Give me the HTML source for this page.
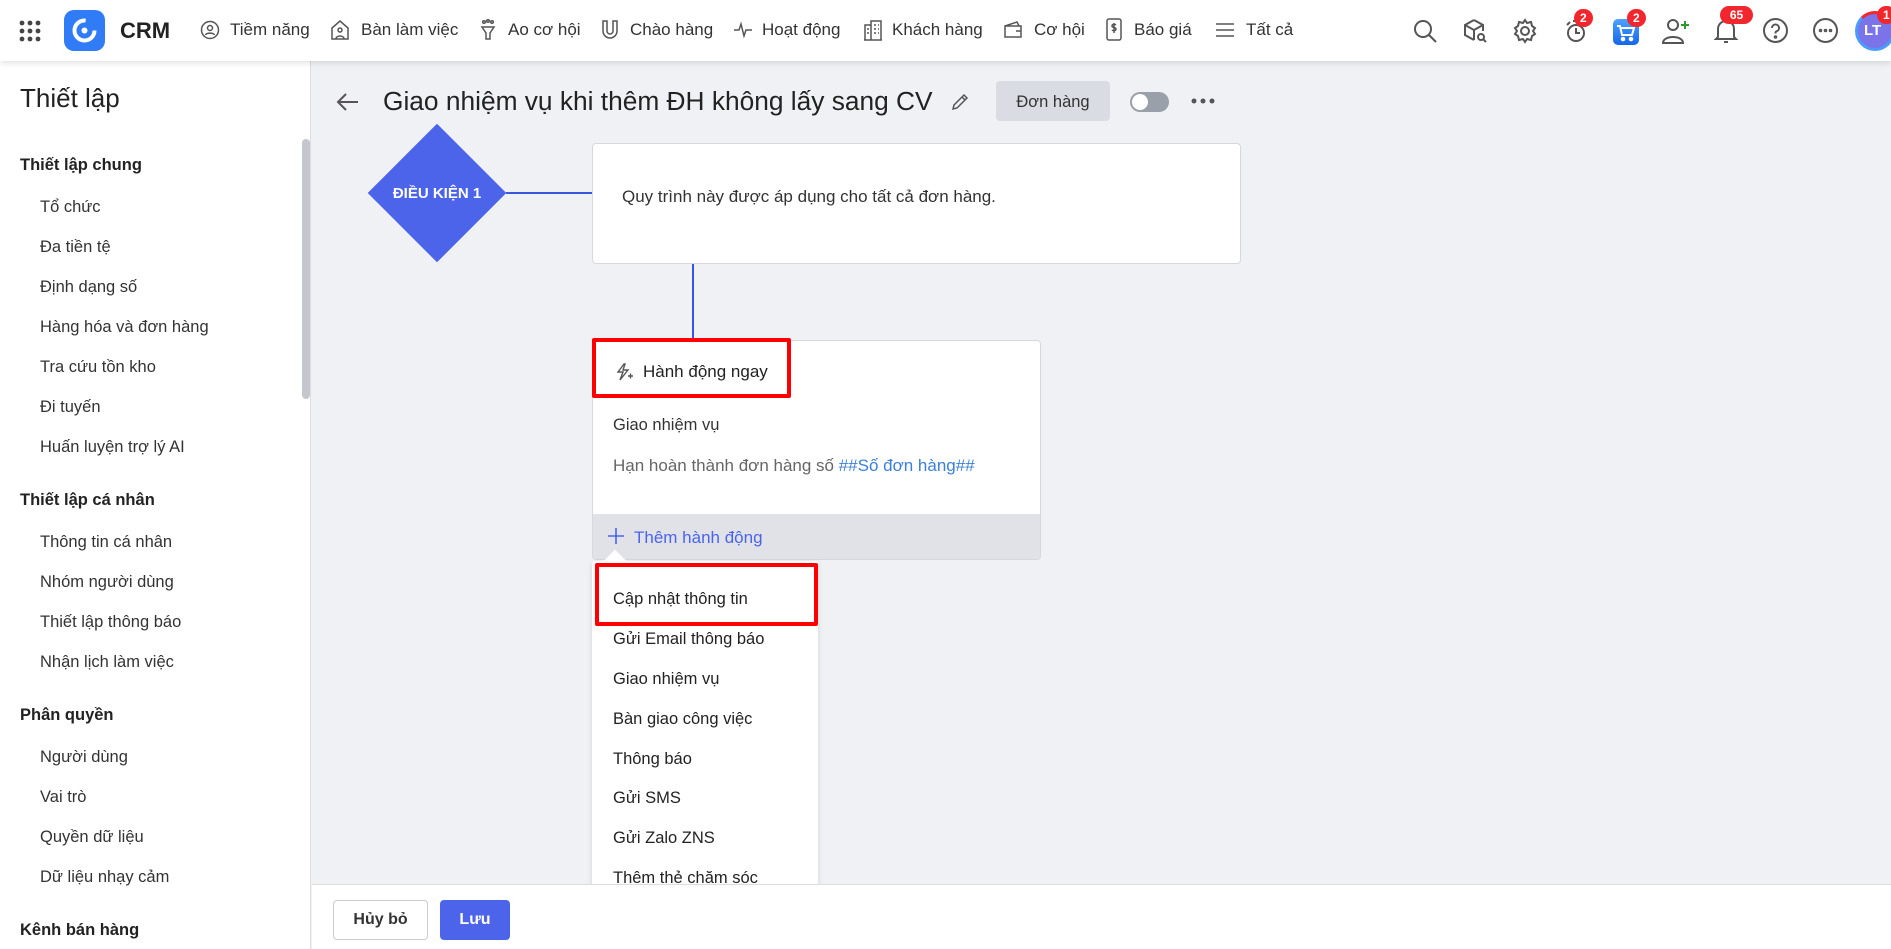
<!DOCTYPE html>
<html><head><meta charset="utf-8"><style>
*{box-sizing:border-box;margin:0;padding:0}
body{width:1891px;height:949px;overflow:hidden;background:#f0f1f4;font-family:"Liberation Sans","Noto Sans CJK SC",sans-serif;color:#222;position:relative}
.a{position:absolute;white-space:nowrap}
.hdr{position:absolute;left:0;top:0;width:1891px;height:61px;background:#fff;box-shadow:0 2px 6px rgba(0,0,0,.12);z-index:5}
.nav{font-size:17px;color:#333;top:20px}
.side{position:absolute;left:0;top:61px;width:311px;height:888px;background:#fff;border-right:1px solid #ddd}
.sh{font-size:16.5px;font-weight:bold;color:#222;left:20px}
.si{font-size:16.5px;color:#333;left:40px}
.badge{position:absolute;background:#f2262d;color:#fff;font-size:12px;font-weight:bold;border-radius:10px;height:18px;line-height:18px;padding:0 6px;text-align:center}
.dd{font-size:16.5px;color:#222;left:613px}
</style></head><body>
<div class="hdr">
<svg class="a" style="left:18px;top:19px" width="24" height="24"><g fill="#444"><circle cx="4" cy="4" r="2.4"/><circle cx="12" cy="4" r="2.4"/><circle cx="20" cy="4" r="2.4"/><circle cx="4" cy="12" r="2.4"/><circle cx="12" cy="12" r="2.4"/><circle cx="20" cy="12" r="2.4"/><circle cx="4" cy="20" r="2.4"/><circle cx="12" cy="20" r="2.4"/><circle cx="20" cy="20" r="2.4"/></g></svg>
<div class="a" style="left:64px;top:10px;width:41px;height:41px;border-radius:10px;background:#2f7cf6"><svg width="41" height="41"><circle cx="20.5" cy="20.5" r="10" fill="none" stroke="#fff" stroke-width="4" stroke-dasharray="48 15"/><circle cx="20.5" cy="20.5" r="3" fill="#fff"/></svg></div>
<div class="a" style="left:120px;top:18px;font-size:22px;font-weight:bold">CRM</div>
<svg class="a" style="left:200px;top:20px" width="20" height="20" fill="none" stroke="#555" stroke-width="1.5"><circle cx="10" cy="10" r="8.5"/><circle cx="10" cy="8" r="2.5"/><path d="M5.5 15c1-2.5 8-2.5 9 0"/></svg>
<div class="a nav" style="left:230px">Tiềm năng</div>
<svg class="a" style="left:330px;top:19px" width="20" height="22" fill="none" stroke="#555" stroke-width="1.5"><path d="M2 20V9l8-7 8 7v11z"/><circle cx="10" cy="11" r="2"/><path d="M6 20c0-4 8-4 8 0"/></svg>
<div class="a nav" style="left:361px">Bàn làm việc</div>
<svg class="a" style="left:479px;top:19px" width="18" height="22" fill="none" stroke="#555" stroke-width="1.5"><path d="M3 8h12l-4 6v6h-4v-6z"/><circle cx="5" cy="3" r="1.3"/><circle cx="9" cy="2" r="1.3"/><circle cx="13" cy="3" r="1.3"/></svg>
<div class="a nav" style="left:508px">Ao cơ hội</div>
<svg class="a" style="left:600px;top:19px" width="20" height="22" fill="none" stroke="#555" stroke-width="1.5"><path d="M3 2v10a7 7 0 0 0 14 0V2h-4v10a3 3 0 0 1-6 0V2z"/></svg>
<div class="a nav" style="left:630px">Chào hàng</div>
<svg class="a" style="left:733px;top:21px" width="20" height="18" fill="none" stroke="#555" stroke-width="1.5"><path d="M1 9h5l2-6 3 12 2-6h6"/></svg>
<div class="a nav" style="left:762px">Hoạt động</div>
<svg class="a" style="left:863px;top:19px" width="20" height="22" fill="none" stroke="#555" stroke-width="1.5"><path d="M2 21V6h6v15M8 21V2h10v19M1 21h18M11 6h2M15 6h1M11 10h2M15 10h1M11 14h2M15 14h1M4 10h2M4 14h2"/></svg>
<div class="a nav" style="left:892px">Khách hàng</div>
<svg class="a" style="left:1003px;top:21px" width="22" height="18" fill="none" stroke="#555" stroke-width="1.5"><path d="M2 5h16v11H2zM2 5l12-4 2 4M13 10h5"/></svg>
<div class="a nav" style="left:1034px">Cơ hội</div>
<svg class="a" style="left:1105px;top:18px" width="18" height="23" fill="none" stroke="#555" stroke-width="1.5"><rect x="2" y="1" width="14" height="21" rx="2"/><path d="M11 7c-1-1-4-1-4 1s4 1 4 3-3 2-4 1M9 5v10"/></svg>
<div class="a nav" style="left:1134px">Báo giá</div>
<svg class="a" style="left:1215px;top:22px" width="20" height="16" stroke="#555" stroke-width="1.5"><path d="M1 2h18M1 8h18M1 14h18"/></svg>
<div class="a nav" style="left:1246px">Tất cả</div>
<svg class="a" style="left:1412px;top:18px" width="26" height="26" fill="none" stroke="#555" stroke-width="2"><circle cx="11" cy="11" r="8"/><path d="M17 17l7 7"/></svg>
<svg class="a" style="left:1462px;top:18px" width="26" height="26" fill="none" stroke="#555" stroke-width="2"><path d="M12 2l9 5v6M12 2 3 7v10l9 5M3 7l9 5 9-5M12 12v10"/><circle cx="19" cy="19" r="3"/><path d="M21 21l3 3"/></svg>
<svg class="a" style="left:1512px;top:18px" width="26" height="26" fill="none" stroke="#555" stroke-width="2"><circle cx="13" cy="13" r="4"/><path d="M13 2l2 3 4-1 1 4 3 2-2 3 2 3-3 2-1 4-4-1-2 3-2-3-4 1-1-4-3-2 2-3-2-3 3-2 1-4 4 1z"/></svg>
<svg class="a" style="left:1563px;top:18px" width="26" height="26" fill="none" stroke="#555" stroke-width="2"><circle cx="13" cy="15" r="8"/><path d="M13 10v5h4M10 3h6M4 7l3-3"/></svg>
<div class="badge" style="left:1574px;top:9px">2</div>
<div class="a" style="left:1613px;top:19px;width:26px;height:26px;border-radius:5px;background:linear-gradient(#4da3ff,#1566e8)"><svg width="26" height="26" fill="none" stroke="#fff" stroke-width="2"><path d="M4 7h3l2 9h10l2-7H8"/><circle cx="10" cy="20" r="1.3" fill="#fff"/><circle cx="18" cy="20" r="1.3" fill="#fff"/></svg></div>
<div class="badge" style="left:1627px;top:9px">2</div>
<svg class="a" style="left:1661px;top:16px" width="30" height="30" fill="none" stroke="#555" stroke-width="2"><circle cx="12" cy="9" r="5"/><path d="M2 27c0-8 20-8 20 0z"/><path d="M24 5v8M20 9h8" stroke="#2a9d2a"/></svg>
<svg class="a" style="left:1713px;top:17px" width="26" height="28" fill="none" stroke="#555" stroke-width="2"><path d="M5 20V12a8 8 0 0 1 16 0v8l2 2H3zM11 25h4"/></svg>
<div class="badge" style="left:1720px;top:6px;width:33px">65</div>
<svg class="a" style="left:1762px;top:17px" width="27" height="27" fill="none" stroke="#555" stroke-width="2"><circle cx="13.5" cy="13.5" r="11.5"/><path d="M10 11a3.5 3.5 0 1 1 4.5 3.3c-1 .3-1 1-1 2.2"/><circle cx="13.5" cy="20" r=".8"/></svg>
<svg class="a" style="left:1812px;top:17px" width="27" height="27" fill="none" stroke="#555" stroke-width="2"><circle cx="13.5" cy="13.5" r="11.5"/><circle cx="8.5" cy="13.5" r=".8"/><circle cx="13.5" cy="13.5" r=".8"/><circle cx="18.5" cy="13.5" r=".8"/></svg>
<div class="a" style="left:1855px;top:11px;width:40px;height:40px;border-radius:50%;border:3px solid #4a9bff;border-top-color:#f2262d;background:#7b73e8;color:#fff;font-weight:bold;font-size:15px;line-height:34px;padding-left:6px">LT</div>
<div class="badge" style="left:1877px;top:6px">1</div>
</div>

<div class="side">
<div class="a" style="left:20px;top:22px;font-size:26px">Thiết lập</div>
<div class="a" style="left:302px;top:78px;width:8px;height:260px;border-radius:4px;background:#c4c7ce"></div>
</div>
<div class="a sh" style="top:156px">Thiết lập chung</div>
<div class="a si" style="top:198px">Tổ chức</div>
<div class="a si" style="top:238px">Đa tiền tệ</div>
<div class="a si" style="top:278px">Định dạng số</div>
<div class="a si" style="top:318px">Hàng hóa và đơn hàng</div>
<div class="a si" style="top:358px">Tra cứu tồn kho</div>
<div class="a si" style="top:398px">Đi tuyến</div>
<div class="a si" style="top:438px">Huấn luyện trợ lý AI</div>
<div class="a sh" style="top:491px">Thiết lập cá nhân</div>
<div class="a si" style="top:533px">Thông tin cá nhân</div>
<div class="a si" style="top:573px">Nhóm người dùng</div>
<div class="a si" style="top:613px">Thiết lập thông báo</div>
<div class="a si" style="top:653px">Nhận lịch làm việc</div>
<div class="a sh" style="top:706px">Phân quyền</div>
<div class="a si" style="top:748px">Người dùng</div>
<div class="a si" style="top:788px">Vai trò</div>
<div class="a si" style="top:828px">Quyền dữ liệu</div>
<div class="a si" style="top:868px">Dữ liệu nhạy cảm</div>
<div class="a sh" style="top:921px">Kênh bán hàng</div>

<svg class="a" style="left:336px;top:92px" width="24" height="20" fill="none" stroke="#555" stroke-width="2"><path d="M22 10H3M10 2 2 10l8 8"/></svg>
<div class="a" style="left:383px;top:86px;font-size:26.3px;color:#222">Giao nhiệm vụ khi thêm ĐH không lấy sang CV</div>
<svg class="a" style="left:950px;top:92px" width="20" height="20" fill="none" stroke="#555" stroke-width="1.5"><path d="M3 17l1-4L14 3l3 3L7 16zM12 5l3 3"/></svg>
<div class="a" style="left:996px;top:81px;width:114px;height:40px;background:#d9dce2;border-radius:4px;font-size:16.5px;text-align:center;line-height:43px;color:#333">Đơn hàng</div>
<div class="a" style="left:1130px;top:92px;width:39px;height:20px;border-radius:10px;background:#9aa0aa"><div style="position:absolute;left:2px;top:2px;width:16px;height:16px;border-radius:50%;background:#fff"></div></div>
<svg class="a" style="left:1190px;top:97px" width="26" height="8" fill="#555"><circle cx="4" cy="4" r="2.5"/><circle cx="13" cy="4" r="2.5"/><circle cx="22" cy="4" r="2.5"/></svg>

<div class="a" style="left:388px;top:144px;width:98px;height:98px;background:#4b64ea;transform:rotate(45deg)"></div>
<div class="a" style="left:368px;top:185px;width:138px;text-align:center;color:#fff;font-size:15px;font-weight:bold">ĐIỀU KIỆN 1</div>
<div class="a" style="left:506px;top:192px;width:86px;height:2px;background:#3a55e0"></div>
<div class="a" style="left:592px;top:143px;width:649px;height:121px;background:#fff;border:1px solid #d6d8dd;border-radius:4px"></div>
<div class="a" style="left:622px;top:187px;font-size:17px;color:#333">Quy trình này được áp dụng cho tất cả đơn hàng.</div>
<div class="a" style="left:692px;top:264px;width:2px;height:76px;background:#3a55e0"></div>

<div class="a" style="left:592px;top:340px;width:449px;height:220px;background:#fff;border:1px solid #d6d8dd;border-radius:4px;overflow:hidden"><div style="position:absolute;left:0;top:173px;width:100%;height:47px;background:#e1e2e7"></div></div>
<svg class="a" style="left:614px;top:362px" width="20" height="20" fill="none" stroke="#555" stroke-width="1.4"><path d="M10 2 4 10h5l-3 8 8-10h-5l2-6zM14 14h5M16.5 11.5v5"/></svg>
<div class="a" style="left:643px;top:362px;font-size:17px;color:#222">Hành động ngay</div>
<div class="a" style="left:592px;top:338px;width:199px;height:60px;border:4px solid #f00;border-radius:2px"></div>
<div class="a" style="left:613px;top:416px;font-size:16.5px;color:#333">Giao nhiệm vụ</div>
<div class="a" style="left:613px;top:456px;font-size:17px;color:#666">Hạn hoàn thành đơn hàng số <span style="color:#3b7fd8">##Số đơn hàng##</span></div>
<svg class="a" style="left:607px;top:527px" width="18" height="18" stroke="#4b64ea" stroke-width="1.6"><path d="M9 1v16M1 9h16"/></svg>
<div class="a" style="left:634px;top:528px;font-size:17px;color:#4b64ea">Thêm hành động</div>

<div class="a" style="left:592px;top:561px;width:226px;height:330px;background:#fff;border-radius:3px;box-shadow:0 2px 6px rgba(0,0,0,.12)"></div>
<div class="a" style="left:607px;top:553px;width:16px;height:16px;background:#fff;transform:rotate(45deg)"></div>
<div class="a" style="left:595px;top:563px;width:223px;height:63px;border:4px solid #f00;border-radius:2px"></div>
<div class="a dd" style="top:590px">Cập nhật thông tin</div>
<div class="a dd" style="top:630px">Gửi Email thông báo</div>
<div class="a dd" style="top:670px">Giao nhiệm vụ</div>
<div class="a dd" style="top:710px">Bàn giao công việc</div>
<div class="a dd" style="top:750px">Thông báo</div>
<div class="a dd" style="top:789px">Gửi SMS</div>
<div class="a dd" style="top:829px">Gửi Zalo ZNS</div>
<div class="a dd" style="top:869px">Thêm thẻ chăm sóc</div>

<div class="a" style="left:312px;top:884px;width:1579px;height:65px;background:#fff;border-top:1px solid #ddd"></div>
<div class="a" style="left:333px;top:900px;width:95px;height:40px;border:1px solid #ccc;border-radius:4px;background:#fff;text-align:center;line-height:38px;font-size:16px;font-weight:bold;color:#333">Hủy bỏ</div>
<div class="a" style="left:440px;top:900px;width:70px;height:40px;border-radius:4px;background:#4b64ea;text-align:center;line-height:40px;font-size:16px;font-weight:bold;color:#fff">Lưu</div>
</body></html>
